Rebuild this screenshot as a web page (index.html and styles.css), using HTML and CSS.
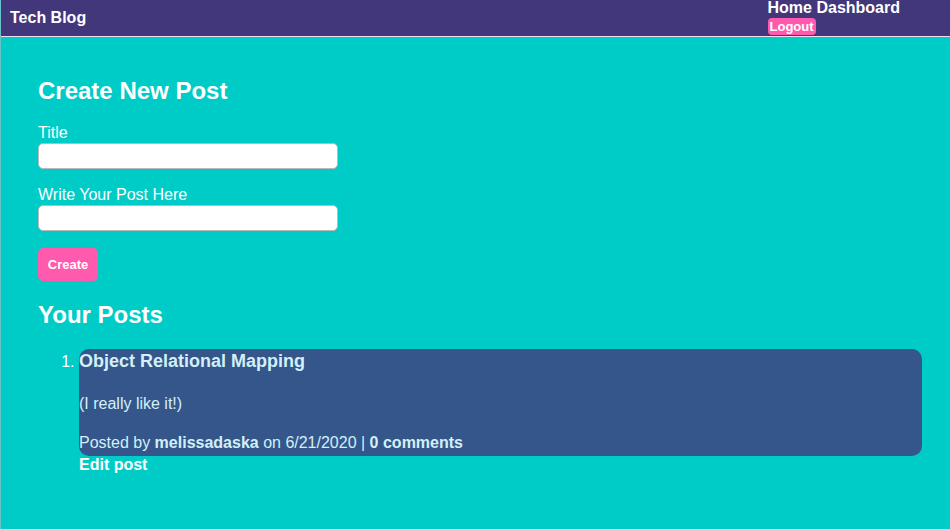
FILE: index.html
```html
<!DOCTYPE html>
<html lang="en">
<head>
<meta charset="utf-8">
<title>Tech Blog</title>
<link rel="stylesheet" href="styles.css">
</head>
<body>
<div class="page">
  <header class="site-header">
    <a class="brand" href="#">Tech Blog</a>
    <nav class="nav">
      <div class="nav-links"><a href="#">Home</a> <a href="#">Dashboard</a></div>
      <button class="logout" type="button">Logout</button>
    </nav>
  </header>
  <main class="main">
    <h2 class="heading">Create New Post</h2>
    <form class="post-form">
      <div class="field">
        <label class="label" for="title">Title</label>
        <input class="input" id="title" type="text">
      </div>
      <div class="field">
        <label class="label" for="body">Write Your Post Here</label>
        <input class="input" id="body" type="text">
      </div>
      <button class="create-btn" type="button">Create</button>
    </form>
    <h2 class="heading heading-posts">Your Posts</h2>
    <ol class="post-list">
      <li class="post-item">
        <div class="card">
          <h3 class="card-title">Object Relational Mapping</h3>
          <p class="card-body">(I really like it!)</p>
          <p class="card-meta">Posted by <strong>melissadaska</strong> on 6/21/2020 | <strong>0 comments</strong></p>
        </div>
        <a class="edit-link" href="#">Edit post</a>
      </li>
    </ol>
  </main>
</div>
</body>
</html>
```

FILE: styles.css
```css
* { box-sizing: border-box; }

html, body {
  margin: 0;
  padding: 0;
  height: 100%;
}

body {
  font-family: "Liberation Sans", Arial, Helvetica, sans-serif;
  font-size: 16px;
  background: #00ccc7;
  color: #ffffff;
}

.page {
  min-height: 100%;
  border-left: 1px solid rgba(190, 190, 200, 0.55);
}

.site-header {
  display: flex;
  justify-content: space-between;
  align-items: flex-start;
  height: 37px;
  padding: 0 50px 0 9px;
  background: #41377a;
  border-bottom: 1px solid #efdcee;
}

.brand {
  color: #ffffff;
  font-weight: bold;
  text-decoration: none;
  line-height: 18px;
  padding-top: 9px;
}

.nav {
  display: flex;
  flex-direction: column;
  align-items: flex-start;
}

.nav-links {
  line-height: 16px;
  font-weight: bold;
}

.nav-links a {
  color: #ffffff;
  text-decoration: none;
}

.logout {
  margin-top: 2px;
  height: 17px;
  padding: 0 2px;
  border: none;
  border-radius: 4px;
  background: #ff5aad;
  color: #ffffff;
  font-family: inherit;
  font-size: 13px;
  font-weight: bold;
  line-height: 17px;
}

.main {
  padding: 20px 28px 40px 37px;
}

.heading {
  font-size: 24px;
  font-weight: bold;
  line-height: 28px;
  margin: 20px 0 19px;
}

.field {
  margin-bottom: 17px;
}

.label {
  display: block;
  line-height: 18px;
}

.input {
  display: block;
  margin-top: 1px;
  width: 300px;
  height: 26px;
  border: 1px solid #b9b9b9;
  border-radius: 5px;
  background: #ffffff;
  font-family: inherit;
  font-size: 14px;
}

.create-btn {
  display: block;
  width: 60px;
  height: 33px;
  padding: 0;
  border: none;
  border-radius: 5px;
  background: #ff5aad;
  color: #ffffff;
  font-family: inherit;
  font-size: 13px;
  font-weight: bold;
}

.heading-posts {
  margin-top: 20px;
  margin-bottom: 20px;
}

.post-list {
  margin: 0;
  padding-left: 41px;
}

.card {
  background: #34568b;
  border-radius: 10px;
  padding: 2px 0 4px;
  color: #d2f0f8;
}

.card-title {
  margin: 0;
  font-size: 18px;
  line-height: 21px;
  font-weight: bold;
}

.card-body {
  margin: 23px 0 0;
  line-height: 18px;
}

.card-meta {
  margin: 21px 0 0;
  line-height: 18px;
}

.edit-link {
  display: block;
  color: #ffffff;
  font-weight: bold;
  text-decoration: none;
  line-height: 18px;
}
```
